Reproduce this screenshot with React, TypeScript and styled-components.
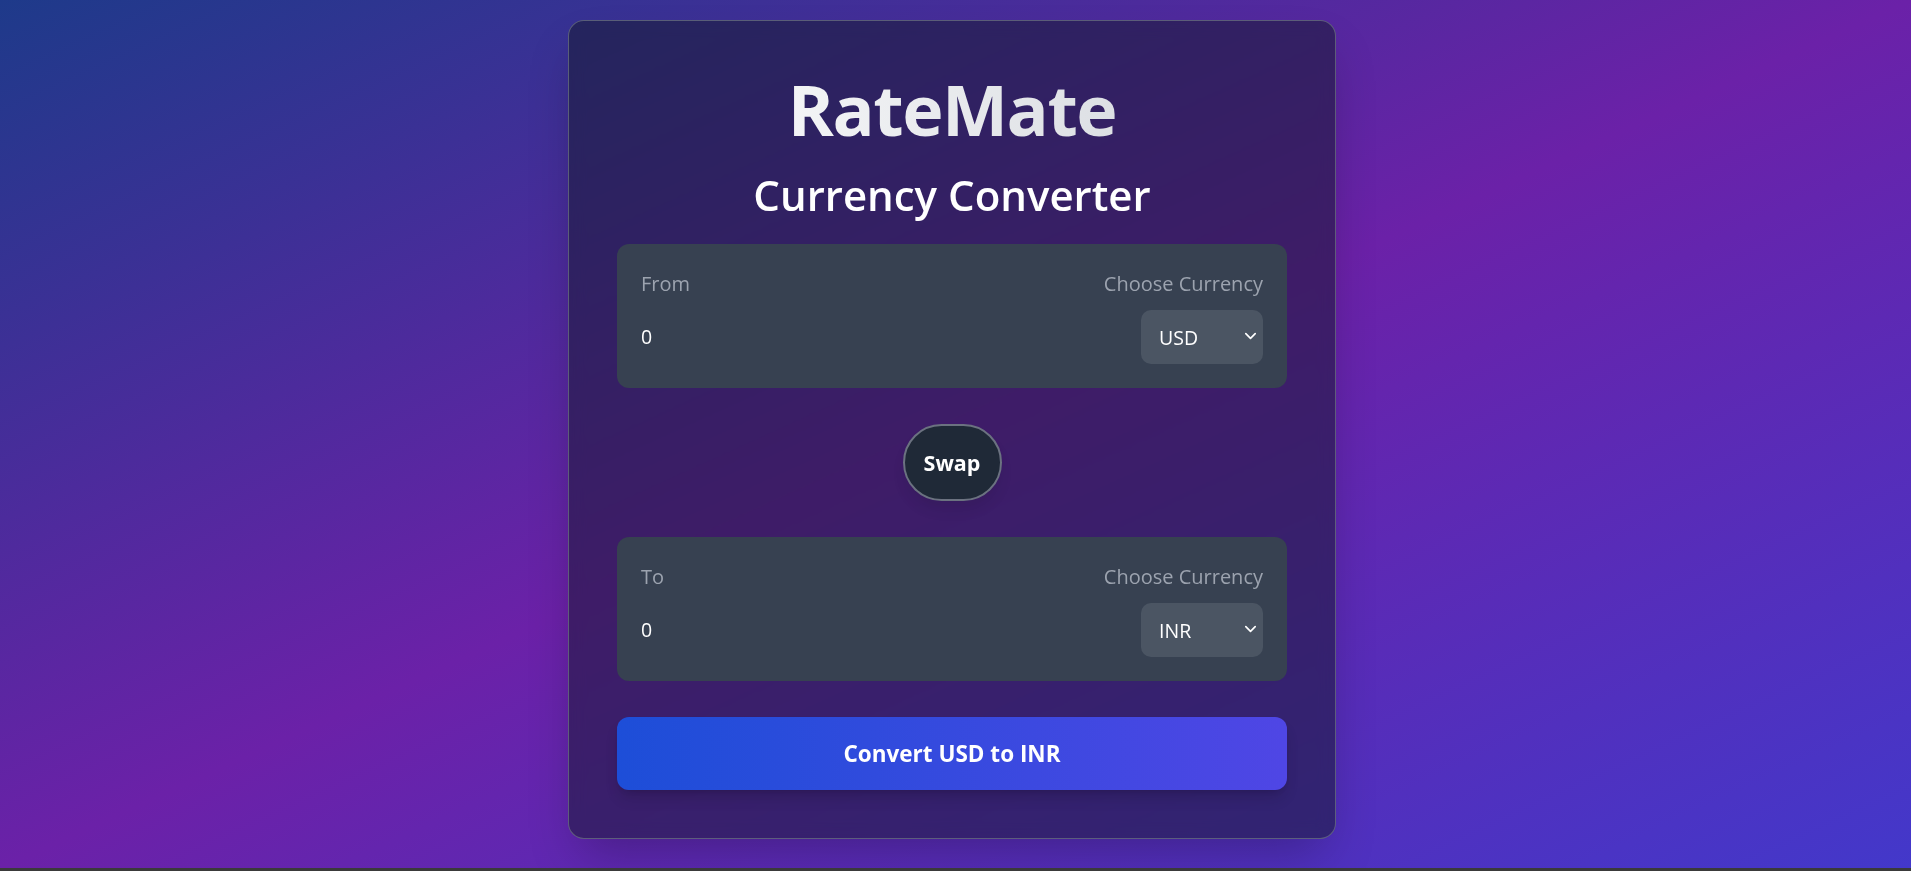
import React, { useState } from "react";
import styled, { createGlobalStyle } from "styled-components";

const GlobalStyle = createGlobalStyle`
  html, body {
    margin: 0;
    padding: 0;
    background: #3a3a3a;
  }
  * { box-sizing: border-box; }
  body {
    font-family: "Open Sans", "Noto Sans", Arial, sans-serif;
  }
`;

const Page = styled.div`
  height: 868px;
  display: flex;
  justify-content: center;
  align-items: flex-start;
  padding: 20px 7px 0 0;
  background: linear-gradient(to bottom right, #1e3a8a 0%, #6b21a8 50%, #4338ca 100%);
  overflow: hidden;
`;

const Card = styled.div`
  width: 768px;
  padding: 48px;
  display: flex;
  flex-direction: column;
  border: 1px solid rgba(107, 114, 128, 0.75);
  border-radius: 16px;
  background: rgba(17, 24, 39, 0.5);
  backdrop-filter: blur(8px);
  box-shadow: 0 25px 50px -12px rgba(0, 0, 0, 0.25);
`;

const Title = styled.h1`
  margin: 0;
  font-size: 70px;
  line-height: 80px;
  font-weight: 700;
  text-align: center;
  letter-spacing: -1.5px;
  background: linear-gradient(to right, #ffffff, #d1d5db);
  -webkit-background-clip: text;
  background-clip: text;
  color: transparent;
`;

const Subtitle = styled.h2`
  margin: 21px 0 0;
  font-size: 42px;
  line-height: 50px;
  font-weight: 600;
  text-align: center;
  color: #ffffff;
  letter-spacing: 0;
`;

const Panel = styled.div<{ $top: number }>`
  margin-top: ${(p) => p.$top}px;
  background: #374151;
  border-radius: 12px;
  padding: 24px;
  display: flex;
  flex-direction: column;
  gap: 10px;
`;

const Row = styled.div`
  display: flex;
  justify-content: space-between;
  align-items: center;
`;

const Label = styled.span`
  font-size: 20px;
  line-height: 32px;
  color: #9ca3af;
`;

const AmountInput = styled.input`
  width: 50%;
  border: none;
  outline: none;
  background: transparent;
  padding: 0;
  font-family: inherit;
  font-size: 19.5px;
  line-height: 28px;
  color: #ffffff;
`;

const SelectWrap = styled.div`
  position: relative;
  width: 122px;
  height: 54px;
`;

const CurrencySelect = styled.select`
  appearance: none;
  -webkit-appearance: none;
  width: 100%;
  height: 100%;
  border: none;
  outline: none;
  border-radius: 10px;
  background: #4b5563;
  color: #ffffff;
  font-family: inherit;
  font-size: 19.5px;
  padding: 0 0 0 18px;
  cursor: pointer;
`;

const Chevron = styled.svg`
  position: absolute;
  right: 5px;
  top: 50%;
  width: 15px;
  height: 15px;
  margin-top: -9px;
  pointer-events: none;
`;

const SwapButton = styled.button`
  align-self: center;
  margin-top: 36px;
  width: 99px;
  height: 77px;
  border-radius: 9999px;
  border: 2px solid #6b7280;
  background: #1f2937;
  color: #ffffff;
  font-family: inherit;
  font-size: 21.5px;
  font-weight: 700;
  cursor: pointer;
  box-shadow: 0 10px 15px -3px rgba(0, 0, 0, 0.1);
  padding: 0;
`;

const ConvertButton = styled.button`
  margin-top: 36px;
  height: 73px;
  width: 100%;
  border: none;
  border-radius: 12px;
  background: linear-gradient(to right, #1d4ed8, #4f46e5);
  color: #ffffff;
  font-family: inherit;
  font-size: 22.5px;
  font-weight: 700;
  cursor: pointer;
  box-shadow: 0 10px 15px -3px rgba(0, 0, 0, 0.15), 0 4px 6px -4px rgba(0, 0, 0, 0.15);
`;

const currencies = ["USD", "INR", "EUR", "GBP", "JPY"];

function CurrencyBox({
  label,
  amount,
  currency,
  top,
  onCurrency,
}: {
  label: string;
  amount: number;
  currency: string;
  top: number;
  onCurrency: (c: string) => void;
}) {
  return (
    <Panel $top={top}>
      <Row>
        <Label>{label}</Label>
        <Label>Choose Currency</Label>
      </Row>
      <Row>
        <AmountInput type="number" value={amount} readOnly />
        <SelectWrap>
          <CurrencySelect value={currency} onChange={(e) => onCurrency(e.target.value)}>
            {currencies.map((c) => (
              <option key={c} value={c}>
                {c}
              </option>
            ))}
          </CurrencySelect>
          <Chevron viewBox="0 0 16 16" fill="none">
            <path d="M3 6l5 5 5-5" stroke="#ffffff" strokeWidth="1.8" strokeLinecap="round" strokeLinejoin="round" />
          </Chevron>
        </SelectWrap>
      </Row>
    </Panel>
  );
}

export default function App() {
  const [from, setFrom] = useState("USD");
  const [to, setTo] = useState("INR");
  return (
    <>
      <GlobalStyle />
      <Page>
        <Card>
          <Title>RateMate</Title>
          <Subtitle>Currency Converter</Subtitle>
          <CurrencyBox label="From" amount={0} currency={from} top={24} onCurrency={setFrom} />
          <SwapButton
            onClick={() => {
              setFrom(to);
              setTo(from);
            }}
          >
            Swap
          </SwapButton>
          <CurrencyBox label="To" amount={0} currency={to} top={36} onCurrency={setTo} />
          <ConvertButton>
            Convert {from} to {to}
          </ConvertButton>
        </Card>
      </Page>
    </>
  );
}
